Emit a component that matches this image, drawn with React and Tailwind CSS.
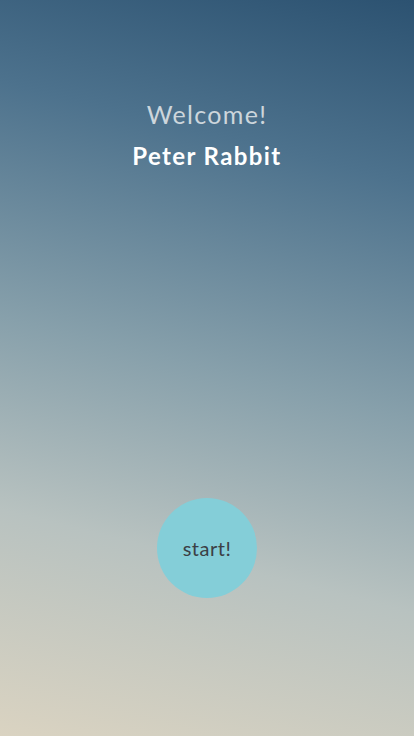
export default function App() {
  return (
    <div
      className="relative w-[414px] h-[736px] overflow-hidden flex flex-col items-center bg-[linear-gradient(194deg,#2c5271_0%,#4d728d_22%,#87a0ab_50%,#b8c2c0_73%,#dad3c1_100%)]"
      style={{ fontFamily: "Lato, 'Open Sans', sans-serif" }}
    >
      <div className="mt-[99px] text-[25px] font-normal leading-[30px] text-[#cdd6dc] tracking-[1.3px]">
        Welcome!
      </div>
      <div className="mt-[13px] text-[24px] font-bold leading-[28px] text-white tracking-[1.4px]">
        Peter Rabbit
      </div>
      <button className="mt-[328px] w-[100px] h-[100px] rounded-full bg-[#84ced8] flex items-center justify-center text-[20px] text-[#3b4045] tracking-[0.5px]">
        start!
      </button>
    </div>
  );
}
